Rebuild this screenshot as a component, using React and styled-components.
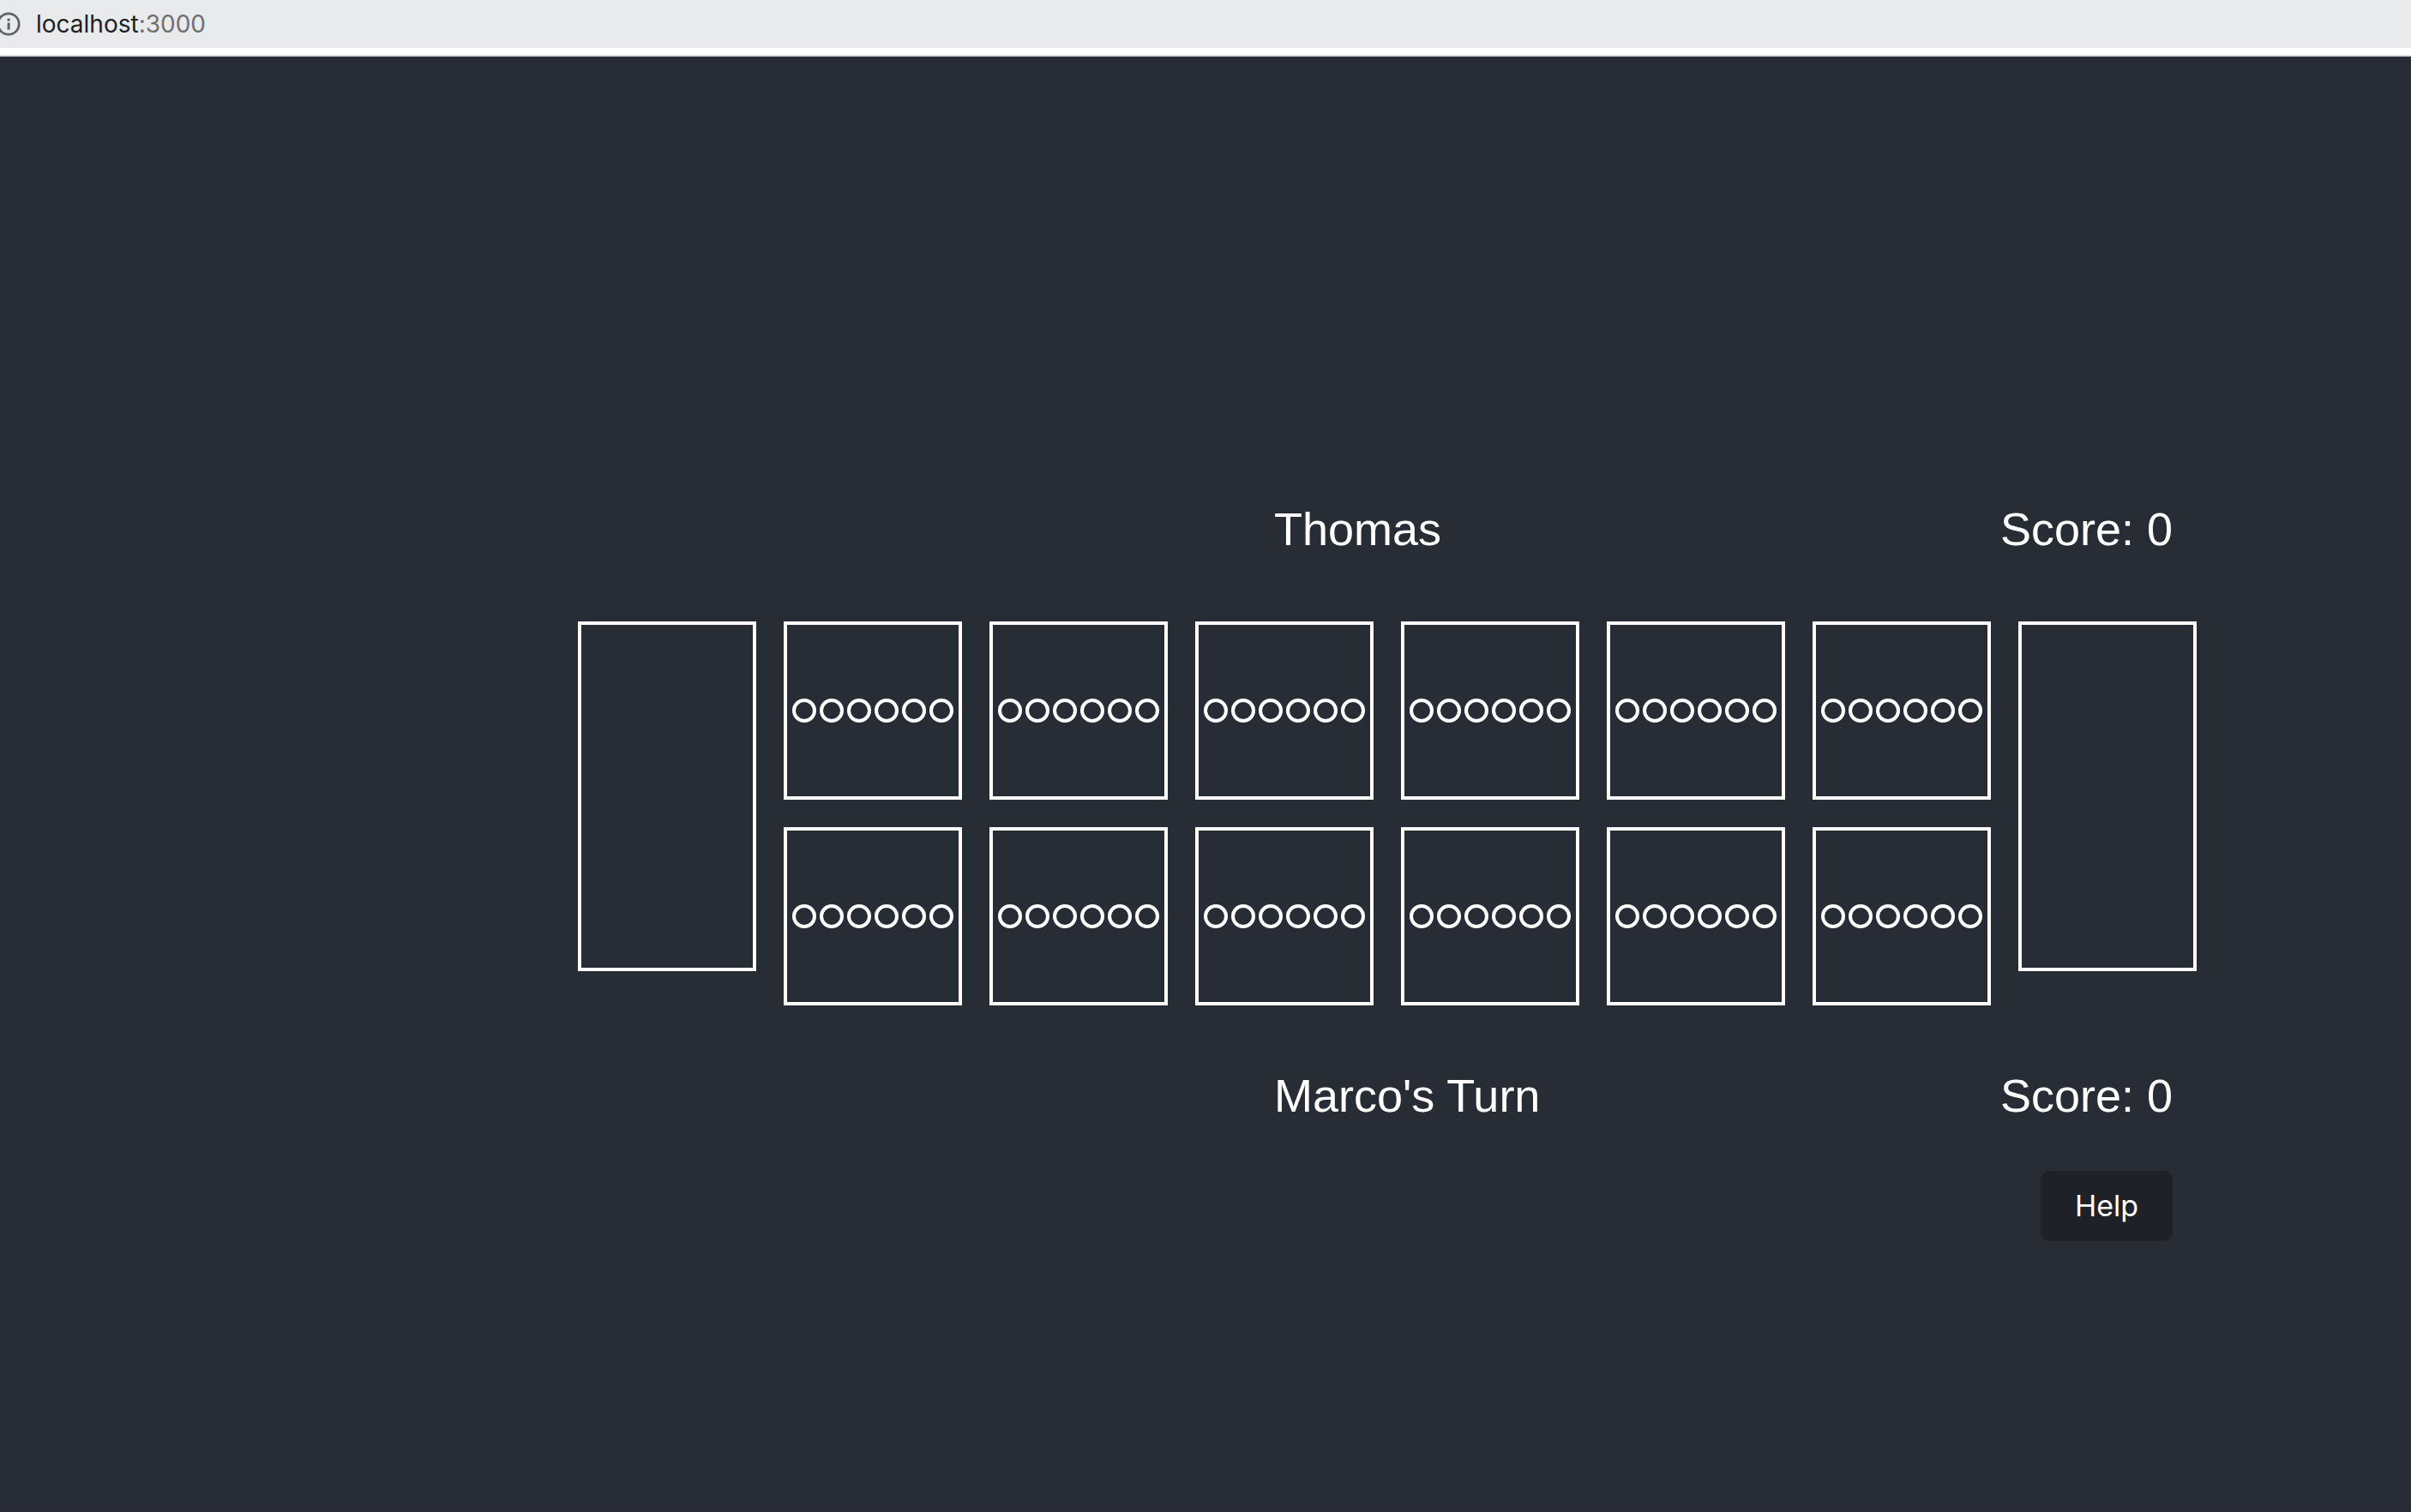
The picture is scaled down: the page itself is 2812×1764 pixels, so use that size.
import React from "react";
import styled, { createGlobalStyle } from "styled-components";

const GlobalStyle = createGlobalStyle`
  *, *::before, *::after { box-sizing: border-box; }
  body {
    margin: 0;
    background: #282c34;
    font-family: Inter, "Liberation Sans", sans-serif;
  }
`;

const Page = styled.div`
  min-height: 100vh;
  display: flex;
  flex-direction: column;
`;

const AddressBar = styled.header`
  height: 66px;
  display: flex;
  flex-direction: column;
  background: #ffffff;
  border-bottom: 2px solid #dadce0;
`;

const AddressField = styled.div`
  height: 56px;
  display: flex;
  align-items: center;
  gap: 18px;
  overflow: hidden;
  background: #e9eaeb;
`;

const InfoButton = styled.button`
  display: flex;
  flex: none;
  margin: 0 0 0 -4px;
  padding: 0;
  border: 0;
  background: none;
  color: #5f6368;
`;

const Url = styled.span`
  font-size: 28px;
  line-height: 34px;
  color: #202124;
`;

const Port = styled.span`
  color: #6e7072;
`;

const Main = styled.main`
  flex: 1;
  display: flex;
  flex-direction: column;
  align-items: center;
  justify-content: center;
  padding: 200px 0 0 424px;
  border-bottom: 1px solid #2b2530;
  background: #282c34;
  color: #ffffff;
`;

const Game = styled.div`
  display: flex;
  flex-direction: column;
`;

const PlayerRow = styled.section`
  display: flex;
  align-items: center;
  justify-content: space-between;
  padding: 0 28px 0 812px;
  font-family: "Liberation Sans", Arial, sans-serif;
  font-size: 54px;
  line-height: 70px;
`;

const PlayerName = styled.h2`
  margin: 0;
  font: inherit;
`;

const Score = styled.span`
  white-space: nowrap;
`;

const Board = styled.div`
  display: flex;
  align-items: flex-start;
  gap: 32px;
  margin: 73px 0 70px;
`;

const Store = styled.div`
  width: 208px;
  height: 408px;
  border: 4px solid #ffffff;
`;

const Pits = styled.div`
  display: grid;
  grid-template-columns: repeat(6, 208px);
  gap: 32px;
`;

const Pit = styled.button`
  height: 208px;
  display: flex;
  align-items: center;
  justify-content: center;
  gap: 4px;
  padding: 0;
  border: 4px solid #ffffff;
  background: none;
`;

const Stone = styled.span`
  width: 28px;
  height: 28px;
  border: 4px solid #ffffff;
  border-radius: 50%;
`;

const Actions = styled.div`
  display: flex;
  justify-content: flex-end;
  margin-top: 53px;
  padding-right: 28px;
`;

const HelpButton = styled.button`
  width: 154px;
  height: 82px;
  padding: 0;
  border: 0;
  border-radius: 10px;
  background: #1e2128;
  color: #ffffff;
  font-family: inherit;
  font-size: 34px;
  line-height: 44px;
`;

const players = {
  top: { name: "Thomas", score: 0 },
  bottom: { name: "Marco's Turn", score: 0 },
};

const pits = Array(12).fill(6);

function Player({ name, score }) {
  return (
    <PlayerRow>
      <PlayerName>{name}</PlayerName>
      <Score>Score: {score}</Score>
    </PlayerRow>
  );
}

function InfoIcon() {
  return (
    <svg width="28" height="28" viewBox="0 0 28 28" aria-hidden="true">
      <circle cx="14" cy="14" r="12.2" fill="none" stroke="currentColor" strokeWidth="2.8" />
      <rect x="12.6" y="7.6" width="3" height="3" fill="currentColor" />
      <rect x="12.6" y="12.6" width="3" height="8" fill="currentColor" />
    </svg>
  );
}

export default function App() {
  return (
    <Page>
      <GlobalStyle />
      <AddressBar>
        <AddressField>
          <InfoButton type="button" aria-label="View site information">
            <InfoIcon />
          </InfoButton>
          <Url>
            localhost<Port>:3000</Port>
          </Url>
        </AddressField>
      </AddressBar>
      <Main>
        <Game>
          <Player {...players.top} />
          <Board>
            <Store />
            <Pits>
              {pits.map((stones, pit) => (
                <Pit key={pit} type="button" aria-label={`Pit ${pit + 1}, ${stones} stones`}>
                  {Array.from({ length: stones }, (_, stone) => (
                    <Stone key={stone} />
                  ))}
                </Pit>
              ))}
            </Pits>
            <Store />
          </Board>
          <Player {...players.bottom} />
          <Actions>
            <HelpButton type="button">Help</HelpButton>
          </Actions>
        </Game>
      </Main>
    </Page>
  );
}
